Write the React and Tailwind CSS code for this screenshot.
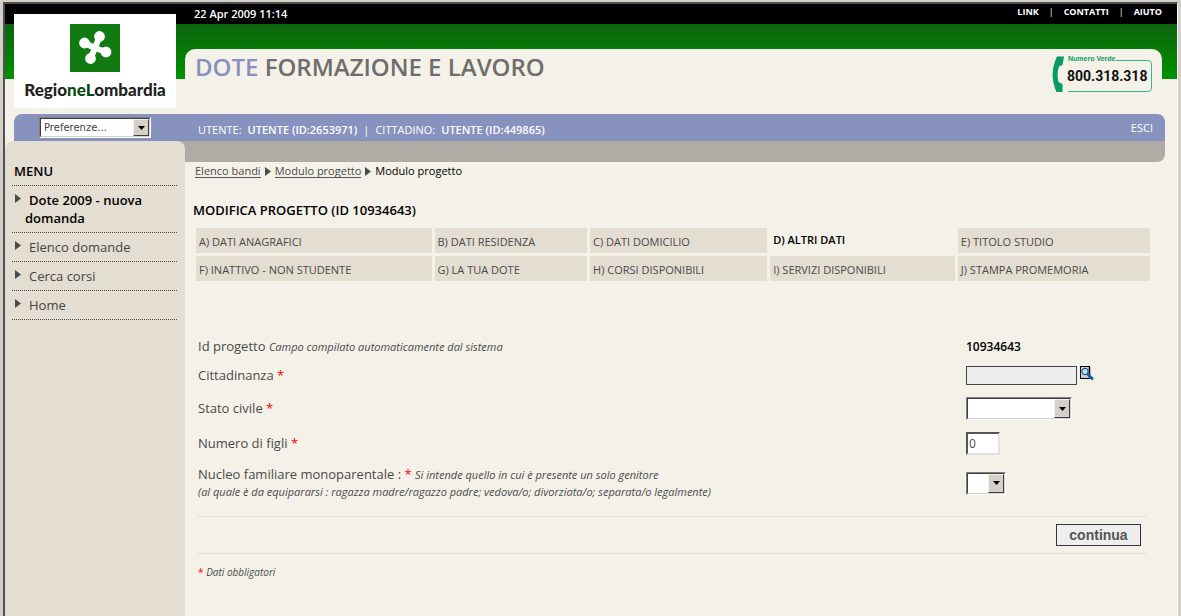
import clsx from 'clsx';

const menuItems = [
  { label: 'Dote 2009 - nuova domanda', active: true },
  { label: 'Elenco domande' },
  { label: 'Cerca corsi' },
  { label: 'Home' },
];

const steps = [
  ['A) DATI ANAGRAFICI', 'B) DATI RESIDENZA', 'C) DATI DOMICILIO', 'D) ALTRI DATI', 'E) TITOLO STUDIO'],
  ['F) INATTIVO - NON STUDENTE', 'G) LA TUA DOTE', 'H) CORSI DISPONIBILI', 'I) SERVIZI DISPONIBILI', 'J) STAMPA PROMEMORIA'],
];

const activeStep = 'D) ALTRI DATI';

function RegionLogo() {
  return (
    <div className="flex h-[94px] w-[162px] flex-col items-center bg-white pt-[10px]">
      <svg width="50" height="48" viewBox="0 0 50 48" aria-hidden="true">
        <rect width="50" height="48" fill="#127a12" />
        <g stroke="#fff" strokeWidth="6" strokeLinecap="round" fill="#fff">
          <path d="M25 24 L29.500 12.500 M25 24 L36 28 M25 24 L20.500 34.500 M25 24 L14.500 19" />
          <circle cx="29.500" cy="12.500" r="2.400" />
          <circle cx="36" cy="28" r="2.400" />
          <circle cx="20.500" cy="34.500" r="2.400" />
          <circle cx="14.500" cy="19" r="2.400" />
        </g>
      </svg>
      <div className="mt-2 font-['Lato','Liberation_Sans',sans-serif] text-[17px] leading-[20px] font-black text-[#222]">
        Regio<span className="text-[#0d4a12]">neL</span>ombardia
      </div>
    </div>
  );
}

function GreenNumber() {
  return (
    <svg className="shrink-0" width="101" height="38" viewBox="0 0 101 38" role="img" aria-label="Numero Verde 800.318.318">
      <path d="M5 0.500 H12 L10.500 9 L7 10.500 Q4.500 18 6.500 26 L10.500 28 V36 H4.500 Q-3.500 18 5 0.500 Z" fill="#0a9a66" />
      <path d="M64 4.500 H96 Q99.500 4.500 99.500 8 V32 Q99.500 35.500 96 35.500 H16" fill="none" stroke="#3cb48a" />
      <text x="16" y="5" fontSize="7" fontWeight="700" fontFamily="Liberation Sans, sans-serif" fill="#0a9a66">Numero Verde</text>
      <text x="15" y="25" fontSize="14" fontWeight="700" fontFamily="Roboto, sans-serif" fill="#111">800.318.318</text>
    </svg>
  );
}

function SearchDocIcon() {
  return (
    <svg width="14" height="15" viewBox="0 0 14 15" aria-hidden="true">
      <rect x="0.500" y="0.500" width="9" height="12" fill="#c9ccd6" stroke="#000" />
      <path d="M9.500 1 V12.500" stroke="#000" strokeWidth="1.500" />
      <circle cx="5" cy="5.500" r="3.200" fill="#a8e6ff" stroke="#26324a" />
      <path d="M7.500 8 L13 13.500" stroke="#0a62b4" strokeWidth="2.600" />
    </svg>
  );
}

function BevelSelect({ id, label, className, children }) {
  return (
    <div className={clsx('relative border border-t-[#808080] border-r-white border-b-white border-l-[#808080] bg-white', className)}>
      <select
        id={id}
        aria-label={label}
        className="block h-full w-full appearance-none border border-t-[#404040] border-r-[#d4d0c8] border-b-[#d4d0c8] border-l-[#404040] bg-transparent pl-[3px] font-['DejaVu_Sans',sans-serif] text-[10px] text-[#444]"
      >
        {children}
      </select>
      <span className="pointer-events-none absolute inset-y-px right-px flex w-4 items-center justify-center border border-t-[#f4f2ec] border-r-[#404040] border-b-[#404040] border-l-[#f4f2ec] bg-[#d4d0c8]">
        <svg width="7" height="4" viewBox="0 0 7 4" aria-hidden="true">
          <path d="M0 0 H7 L3.500 4 Z" fill="#000" />
        </svg>
      </span>
    </div>
  );
}

function Arrow({ className }) {
  return (
    <svg className={className} width="6" height="9" viewBox="0 0 6 9" aria-hidden="true">
      <path d="M0 0 L6 4.500 L0 9 Z" fill="currentColor" />
    </svg>
  );
}

function Required() {
  return <span className="text-[#f00]">*</span>;
}

function Hint({ children }) {
  return <em className="text-[11px]">{children}</em>;
}

function FormRow({ htmlFor, label, children, className }) {
  return (
    <div className={clsx('flex items-center', className)}>
      <div className="min-w-0 flex-1 leading-[17px]">
        {htmlFor ? <label htmlFor={htmlFor}>{label}</label> : label}
      </div>
      <div className="flex w-[180px] shrink-0 items-start">{children}</div>
    </div>
  );
}

function Header() {
  return (
    <header className="relative">
      <div className="flex h-5 items-start justify-between bg-black pr-[15px] pl-[189px] text-white">
        <time className="text-[11px] leading-5 font-semibold">22 Apr 2009 11:14</time>
        <nav className="flex gap-[10px] text-[9px] leading-4 font-bold">
          <a href="#link">LINK</a>
          <span className="font-normal">|</span>
          <a href="#contatti">CONTATTI</a>
          <span className="font-normal">|</span>
          <a href="#aiuto">AIUTO</a>
        </nav>
      </div>
      <div className="h-[90px] bg-[linear-gradient(#0d640d,#009200_55px,#f4f1e8_55px)] pt-[25px] pr-[15px] pl-[180px]">
        <div className="flex h-[65px] items-start justify-between rounded-t-[10px] bg-[#f4f1e8] pt-[3px] pr-[9px] pl-[10px]">
          <h1 className="text-[24px] leading-[30px] font-semibold text-[#6d6d6d]">
            <span className="text-[#8891bf]">DOTE</span> FORMAZIONE E LAVORO
          </h1>
          <div className="pt-1">
            <GreenNumber />
          </div>
        </div>
      </div>
      <div className="absolute top-[10px] left-[9px]">
        <RegionLogo />
      </div>
    </header>
  );
}

function UserBar() {
  return (
    <div className="mr-[12px] ml-[9px] flex h-[27px] items-start rounded-t-[8px] bg-[#8792bf] pt-[3px] text-[11px] text-white">
      <BevelSelect label="Preferenze" className="ml-[25px] h-[21px] w-[112px]">
        <option>Preferenze...</option>
      </BevelSelect>
      <div className="ml-[47px] flex flex-1 gap-[6px] pt-[3px] leading-5">
        <span>UTENTE:</span>
        <b className="font-semibold">UTENTE (ID:2653971)</b>
        <span>|</span>
        <span>CITTADINO:</span>
        <b className="font-semibold">UTENTE (ID:449865)</b>
      </div>
      <a href="#esci" className="mr-[12px] pt-px leading-5">ESCI</a>
    </div>
  );
}

function Sidebar() {
  return (
    <aside className="w-[180px] shrink-0 rounded-t-[8px] bg-[#e4ddd1] pr-2 pl-[7px]">
      <h2 className="border-b border-dotted border-[#444] pt-[21px] pb-[5px] pl-[2px] text-[13px] leading-[18px] font-semibold text-black">MENU</h2>
      <ul>
        {menuItems.map((item) => (
          <li key={item.label} className="flex border-b border-dotted border-[#444] pt-[5px] pb-[5px] pl-[3px]">
            <Arrow className="mt-[3px] shrink-0" />
            <a
              href="#menu"
              className={clsx('ml-1 indent-1 text-[13px] leading-[18px]', item.active ? 'pr-6 font-semibold text-black' : 'text-[#444]')}
            >
              {item.label}
            </a>
          </li>
        ))}
      </ul>
    </aside>
  );
}

function StepTable() {
  return (
    <table className="w-full table-fixed border-separate border-spacing-[3px] text-[11px]">
      <colgroup>
        <col className="w-[25%]" />
        <col className="w-[16.2%]" />
        <col className="w-[18.8%]" />
        <col className="w-[19.6%]" />
        <col className="w-[20.4%]" />
      </colgroup>
      <tbody>
        {steps.map((row) => (
          <tr key={row[0]}>
            {row.map((step) => (
              <td
                key={step}
                className={clsx(
                  'h-[25px] px-[3px] leading-4 whitespace-nowrap',
                  step === activeStep ? 'pb-px font-semibold text-black' : 'bg-[#e4ddd1] pt-[3px]',
                )}
              >
                <a href="#step">{step}</a>
              </td>
            ))}
          </tr>
        ))}
      </tbody>
    </table>
  );
}

function ProjectForm() {
  return (
    <form className="mt-[54px] mr-[31px] ml-[13px] text-[13px]" onSubmit={(e) => e.preventDefault()}>
      <FormRow label={<>Id progetto <Hint>Campo compilato automaticamente dal sistema</Hint></>}>
        <b className="text-[12px] leading-4 font-semibold text-black">10934643</b>
      </FormRow>
      <FormRow className="mt-[11px]" htmlFor="cittadinanza" label={<>Cittadinanza <Required /></>}>
        <input id="cittadinanza" type="text" readOnly className="h-[19px] w-[111px] border border-[#444] bg-[#eee] px-1 text-[11px]" />
        <button type="button" aria-label="Cerca cittadinanza" className="ml-[3px]">
          <SearchDocIcon />
        </button>
      </FormRow>
      <FormRow className="mt-[12px]" htmlFor="stato" label={<>Stato civile <Required /></>}>
        <BevelSelect id="stato" className="h-[23px] w-[106px]">
          <option />
        </BevelSelect>
      </FormRow>
      <FormRow className="mt-[12px]" htmlFor="figli" label={<>Numero di figli <Required /></>}>
        <input
          id="figli"
          type="text"
          defaultValue="0"
          className="h-[23px] w-[34px] border-2 border-t-[#555] border-r-[#e4e2da] border-b-[#e4e2da] border-l-[#555] bg-white px-px text-[12px]"
        />
      </FormRow>
      <FormRow
        className="mt-[11px]"
        htmlFor="nucleo"
        label={
          <>
            Nucleo familiare monoparentale : <Required /> <Hint>Si intende quello in cui è presente un solo genitore</Hint>
            <br />
            <Hint>(al quale è da equipararsi : ragazza madre/ragazzo padre; vedova/o; divorziata/o; separata/o legalmente)</Hint>
          </>
        }
      >
        <BevelSelect id="nucleo" className="h-[23px] w-[40px]">
          <option />
        </BevelSelect>
      </FormRow>
      <div className="mt-4 flex items-start justify-end border-y border-[#e4ddd1] pt-[7px] pr-[5px] pb-[7px]">
        <button type="submit" className="h-[22px] w-[85px] border border-[#333] bg-[#eee] font-['Liberation_Sans',Arial,sans-serif] text-[14px] leading-5 font-bold text-[#555]">
          continua
        </button>
      </div>
      <p className="mt-[10px] text-[10px] leading-4"><Required /> <em>Dati obbligatori</em></p>
    </form>
  );
}

export default function App() {
  return (
    <div className="flex min-h-screen flex-col border-t-2 border-r-3 border-l-3 border-[#d4d0c8] bg-[#f4f1e8] font-['Open_Sans','Liberation_Sans',sans-serif] text-[#4a4a4a]">
      <div className="flex flex-1 flex-col border-t-2 border-r border-l-2 border-t-[#505050] border-r-white border-l-[#505050]">
        <Header />
        <UserBar />
        <div className="flex flex-1 bg-[linear-gradient(#b0aba4,#b0aba4)] bg-[length:100%_21px] bg-[position:20px_0] bg-no-repeat">
          <Sidebar />
          <main className="min-w-0 flex-1">
            <div className="h-[21px] bg-[#f4f1e8]">
              <div className="mr-[12px] h-full rounded-br-[8px] bg-[#b0aba4]" />
            </div>
            <nav aria-label="Percorso" className="flex items-center gap-1 pl-[10px] text-[11px] leading-[18px]">
              <a href="#bandi" className="border-b border-[#555] leading-[13px]">Elenco bandi</a>
              <Arrow />
              <a href="#modulo" className="border-b border-[#555] leading-[13px]">Modulo progetto</a>
              <Arrow />
              <span className="font-medium text-black">Modulo progetto</span>
            </nav>
            <h2 className="mt-[21px] pl-[8px] text-[13px] leading-[18px] font-semibold text-black">MODIFICA PROGETTO (ID 10934643)</h2>
            <div className="mt-[6px] mr-[24px] ml-[8px]">
              <StepTable />
            </div>
            <ProjectForm />
          </main>
        </div>
      </div>
    </div>
  );
}
